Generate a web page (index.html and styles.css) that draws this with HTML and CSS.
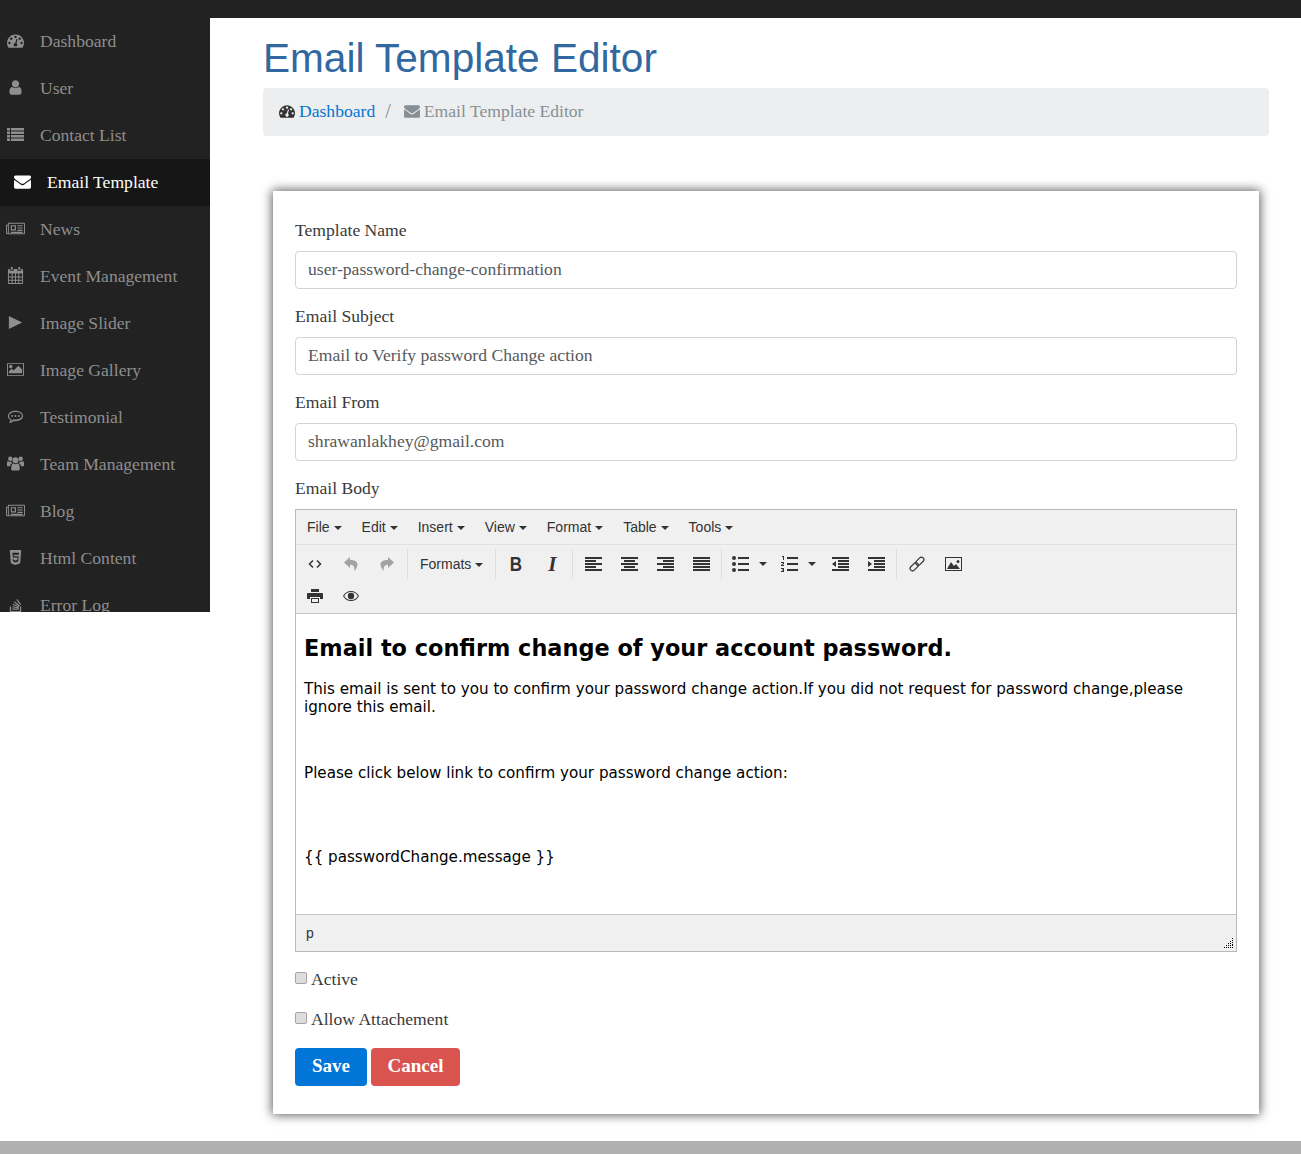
FILE: index.html
```html
<!DOCTYPE html>
<html lang="en">
<head>
  <meta charset="UTF-8">
  <meta name="viewport" content="width=device-width, initial-scale=1">
  <title>Email Template Editor</title>
  <link rel="stylesheet" href="styles.css">
</head>
<body>
  <svg class="defs" xmlns="http://www.w3.org/2000/svg">
    <symbol id="i-gauge" viewBox="0 0 1792 1792"><path d="M384 1152q0-53-37.500-90.500t-90.500-37.500-90.500 37.500-37.500 90.500 37.500 90.500 90.500 37.500 90.500-37.500 37.500-90.500zm192-448q0-53-37.500-90.500t-90.500-37.500-90.500 37.500-37.500 90.500 37.500 90.500 90.500 37.500 90.500-37.500 37.500-90.500zm428 481l101-382q6-26-7.500-48.500t-38.500-29.500-48 6.500-30 39.500l-101 382q-60 5-107 43.500t-63 98.500q-20 77 20 146t117 89 146-20 89-117q16-60-6-117t-72-91zm660-33q0-53-37.500-90.500t-90.500-37.500-90.500 37.500-37.500 90.500 37.500 90.500 90.500 37.500 90.500-37.500 37.500-90.500zm-640-640q0-53-37.500-90.500t-90.500-37.500-90.500 37.500-37.500 90.500 37.500 90.500 90.500 37.500 90.500-37.500 37.500-90.500zm448 192q0-53-37.500-90.500t-90.500-37.500-90.500 37.500-37.500 90.500 37.500 90.500 90.500 37.500 90.500-37.500 37.500-90.500zm320 448q0 261-141 483-19 29-54 29h-1402q-35 0-54-29-141-221-141-483 0-182 71-348t191-286 286-191 348-71 348 71 286 191 191 286 71 348z"/></symbol>
    <symbol id="i-user" viewBox="0 0 1792 1792"><path d="M1536 1399q0 109-62.500 187t-150.500 78h-854q-88 0-150.500-78t-62.500-187q0-85 8.500-160.500t31.500-152 58.500-131 94-89 134.500-34.500q131 128 313 128t313-128q76 0 134.500 34.500t94 89 58.500 131 31.500 152 8.500 160.500zm-256-887q0 159-112.500 271.500t-271.500 112.500-271.500-112.500-112.500-271.500 112.500-271.500 271.500-112.500 271.500 112.500 112.500 271.500z"/></symbol>
    <symbol id="i-list" viewBox="0 0 17 17"><path d="M0 2h3v2.500H0zM4 2h13v2.500H4zM0 5.500h3V8H0zM4 5.500h13V8H4zM0 9h3v2.500H0zM4 9h13v2.500H4zM0 12.500h3V15H0zM4 12.500h13V15H4z"/></symbol>
    <symbol id="i-env" viewBox="0 0 1792 1792"><path d="M1792 710v794q0 66-47 113t-113 47h-1472q-66 0-113-47t-47-113v-794q44 49 101 87 362 246 497 345 57 42 92.500 65.500t94.500 48 110 24.500h2q51 0 110-24.500t94.500-48 92.500-65.500q170-123 498-345 57-39 100-87zm0-294q0 79-49 151t-122 123q-376 261-468 325-10 7-42.500 30.500t-54 38-52 32.500-57.500 27-50 9h-2q-23 0-50-9t-57.500-27-52-32.500-54-38-42.500-30.500q-91-64-262-182.500t-205-142.500q-62-42-117-115.500t-55-136.500q0-78 41.500-130t118.500-52h1472q65 0 112.500 47t47.500 113z"/></symbol>
    <symbol id="i-news" viewBox="0 0 20 18"><path fill-rule="evenodd" d="M2 3h17a1 1 0 0 1 1 1v10a1 1 0 0 1-1 1H1.500A1.500 1.500 0 0 1 0 13.500V5h2zm1 1v9.500a1 1 0 0 1-.3.5H19V4zM1 6v7.500a.5.500 0 0 0 1 0V6zM5 5.500h5.500V11H5zm1.200 1.200v3h3v-3zM12 5.500h5.500v1.200H12zm0 2.400h5.500v1.200H12zm0 2.400h5.500v1.200H12zM5 12.500h12.500v1.200H5z"/></symbol>
    <symbol id="i-cal" viewBox="0 0 18 18"><path fill-rule="evenodd" d="M4 0h2v3H4zM12 0h2v3h-2zM2 2h1v2h4V2h4v2h4V2h1a1 1 0 0 1 1 1v14a1 1 0 0 1-1 1H2a1 1 0 0 1-1-1V3a1 1 0 0 1 1-1zm0 5v3h3V7zm4 0v3h2.500V7zm3.500 0v3H12V7zm3.500 0v3h3V7zM2 11v2.500h3V11zm4 0v2.500h2.500V11zm3.500 0v2.500H12V11zm3.500 0v2.500h3V11zM2 14.500V17h3v-2.500zm4 0V17h2.500v-2.500zm3.500 0V17H12v-2.500zm3.500 0V17h3v-2.500z"/></symbol>
    <symbol id="i-play" viewBox="0 0 18 18"><path d="M2 2l14 7-14 7z"/></symbol>
    <symbol id="i-pic" viewBox="0 0 18 18"><path fill-rule="evenodd" d="M1 2h16a1 1 0 0 1 1 1v12a1 1 0 0 1-1 1H1a1 1 0 0 1-1-1V3a1 1 0 0 1 1-1zm0 1v12h16V3zM2 13v-2l3-3 2 2 5-5 4 4v4zM4 4a1.800 1.800 0 1 1 0 3.600A1.800 1.800 0 0 1 4 4z"/></symbol>
    <symbol id="i-chat" viewBox="0 0 18 18"><path fill-rule="evenodd" d="M9 3c4.400 0 8 2.400 8 5.500S13.400 14 9 14c-.7 0-1.300 0-1.900-.2C5.900 15 4.200 15.900 2 16c.8-.9 1.500-2 1.600-3.200C2 11.800 1 10.200 1 8.500 1 5.400 4.600 3 9 3zm0 1.200c-3.700 0-6.800 1.900-6.800 4.300 0 1.500 1 2.700 2.700 3.600 0 .6-.2 1.100-.4 1.600.9-.4 1.700-1 2.300-1.700.7.100 1.400.2 2.200.2 3.700 0 6.800-1.900 6.800-4 0-2.300-3.100-4-6.800-4zM5.500 7.500a1 1 0 1 1 0 2 1 1 0 0 1 0-2zm3.500 0a1 1 0 1 1 0 2 1 1 0 0 1 0-2zm3.500 0a1 1 0 1 1 0 2 1 1 0 0 1 0-2z"/></symbol>
    <symbol id="i-team" viewBox="0 0 18 18"><circle cx="9" cy="5.500" r="3.200"/><circle cx="3.500" cy="4" r="2.300"/><circle cx="14.500" cy="4" r="2.300"/><path d="M5 10.500C5.500 9.500 6.500 9 7 9c.6.500 1.200.8 2 .8s1.400-.3 2-.8c.5 0 1.500.5 2 1.500.4.900.5 3.500.5 4.500 0 1-.7 1.500-1.500 1.500H6c-.8 0-1.500-.5-1.500-1.500 0-1 .1-3.600.5-4.500zM0 8c0-1 .7-1.500 1.300-1.500.6.400 1.300.6 2.200.6.400 0 .6 0 1-.2.100.8.400 1.400.9 1.900-1 .5-2 1.500-2.200 3.200H1C.3 12 0 11.500 0 11zm18 0c0-1-.7-1.500-1.300-1.500-.6.400-1.300.6-2.200.6-.4 0-.6 0-1-.2-.1.800-.4 1.400-.9 1.900 1 .5 2 1.500 2.200 3.200H17c.7 0 1-.5 1-1z"/></symbol>
    <symbol id="i-html" viewBox="0 0 18 18"><path fill-rule="evenodd" d="M3 1h12l-1 14-5 2-5-2zm2.800 3l.4 5h5l-.2 2.600-2 .6-2-.6-.1-1.300H6l.2 2.600L9 14.200l2.900-.9.5-5.500H7.300L7.200 6h5.400l.1-2z"/></symbol>
    <symbol id="i-stack" viewBox="0 0 18 18"><path d="M3 11h1.300v5h9.400v-5H15v6.300H3z"/><path d="M5.500 13.200h7v1.300h-7zM5.700 10.800l6.900 1.300-.2 1.200-6.900-1.300zM6.500 8.200l6.400 3-.5 1.100-6.400-3zM8.200 5.500l5.400 4.500-.8 1-5.400-4.500zM10.800 3.200l4.100 5.600-1 .8-4.100-5.600z"/></symbol>

    <symbol id="m-code" viewBox="0 0 16 16"><path fill="none" stroke="currentColor" stroke-width="1.500" d="M6 4.500L2.500 8 6 11.500M10 4.500L13.500 8 10 11.500"/></symbol>
    <symbol id="m-undo" viewBox="0 0 16 16"><path d="M7 1L1 6.500 7 12V8.800c3 0 4.500 1.200 4.500 6.200 2-2.500 3-5 3-6.500C14.500 5 11 4 7 4z"/></symbol>
    <symbol id="m-redo" viewBox="0 0 16 16"><path d="M9 1l6 5.500L9 12V8.800c-3 0-4.500 1.200-4.500 6.200-2-2.500-3-5-3-6.500C1.500 5 5 4 9 4z"/></symbol>
    <symbol id="m-left" viewBox="0 0 17 14"><path d="M0 0h17v2H0zM0 3h11v2H0zM0 6h17v2H0zM0 9h11v2H0zM0 12h17v2H0z"/></symbol>
    <symbol id="m-center" viewBox="0 0 17 14"><path d="M0 0h17v2H0zM3 3h11v2H3zM0 6h17v2H0zM3 9h11v2H3zM0 12h17v2H0z"/></symbol>
    <symbol id="m-right" viewBox="0 0 17 14"><path d="M0 0h17v2H0zM6 3h11v2H6zM0 6h17v2H0zM6 9h11v2H6zM0 12h17v2H0z"/></symbol>
    <symbol id="m-just" viewBox="0 0 17 14"><path d="M0 0h17v2H0zM0 3h17v2H0zM0 6h17v2H0zM0 9h17v2H0zM0 12h17v2H0z"/></symbol>
    <symbol id="m-bull" viewBox="0 0 17 16"><circle cx="2" cy="2" r="2"/><circle cx="2" cy="8" r="2"/><circle cx="2" cy="14" r="2"/><path d="M6 1h11v2H6zM6 7h11v2H6zM6 13h11v2H6z"/></symbol>
    <symbol id="m-num" viewBox="0 0 17 16"><path d="M1 0h2v4H2V1H1zM0 6h3v2L1 9h2v1H0V9l2-1.500V7H0zM0 12h3v4H0v-1h2v-.5H1v-1h1V13H0z"/><path d="M6 1h11v2H6zM6 7h11v2H6zM6 13h11v2H6z"/></symbol>
    <symbol id="m-out" viewBox="0 0 17 14"><path d="M0 0h17v2H0zM6 3h11v2H6zM6 6h11v2H6zM6 9h11v2H6zM0 12h17v2H0zM4 4v6L0 7z"/></symbol>
    <symbol id="m-in" viewBox="0 0 17 14"><path d="M0 0h17v2H0zM6 3h11v2H6zM6 6h11v2H6zM6 9h11v2H6zM0 12h17v2H0zM0 4v6l4-3z"/></symbol>
    <symbol id="m-link" viewBox="0 0 16 16"><g fill="none" stroke="currentColor" stroke-width="1.200"><rect x="8.400" y=".45" width="4.800" height="9.500" rx="2.400" transform="rotate(45 10.800 5.200)"/><rect x="2.800" y="6.050" width="4.800" height="9.500" rx="2.400" transform="rotate(45 5.200 10.800)"/></g></symbol>
    <symbol id="m-image" viewBox="0 0 17 14"><path fill-rule="evenodd" d="M0 0h17v14H0zm1 1v12h15V1zM2 12l4-7 3 4 2-2 4 5zM13 3a1.500 1.500 0 1 1 0 3 1.500 1.500 0 0 1 0-3z"/></symbol>
    <symbol id="m-print" viewBox="0 0 16 16"><path fill-rule="evenodd" d="M4 1h8v3H4zM1 5h14a1 1 0 0 1 1 1v5h-3V9H3v2H0V6a1 1 0 0 1 1-1zM4 10h8v5H4zm1 1v3h6v-3z"/></symbol>
    <symbol id="m-eye" viewBox="0 0 16 12"><path fill-rule="evenodd" d="M8 1c3.500 0 6.500 2 8 5-1.500 3-4.500 5-8 5S1.500 9 0 6c1.500-3 4.500-5 8-5zm0 1C5 2 2.600 3.600 1.200 6 2.600 8.400 5 10 8 10s5.400-1.600 6.800-4C13.400 3.600 11 2 8 2zm0 .8a3.200 3.200 0 1 1 0 6.400 3.200 3.200 0 0 1 0-6.400z"/></symbol>
  </svg>

  <div class="topbar"></div>

  <div class="layout">
    <nav class="sidebar">
      <a class="nav-item" href="#"><svg class="nav-icon"><use href="#i-gauge"/></svg>Dashboard</a>
      <a class="nav-item" href="#"><svg class="nav-icon"><use href="#i-user"/></svg>User</a>
      <a class="nav-item" href="#"><svg class="nav-icon"><use href="#i-list"/></svg>Contact List</a>
      <a class="nav-item active" href="#"><svg class="nav-icon"><use href="#i-env"/></svg>Email Template</a>
      <a class="nav-item" href="#"><svg class="nav-icon wide"><use href="#i-news"/></svg>News</a>
      <a class="nav-item" href="#"><svg class="nav-icon"><use href="#i-cal"/></svg>Event Management</a>
      <a class="nav-item" href="#"><svg class="nav-icon"><use href="#i-play"/></svg>Image Slider</a>
      <a class="nav-item" href="#"><svg class="nav-icon"><use href="#i-pic"/></svg>Image Gallery</a>
      <a class="nav-item" href="#"><svg class="nav-icon"><use href="#i-chat"/></svg>Testimonial</a>
      <a class="nav-item" href="#"><svg class="nav-icon"><use href="#i-team"/></svg>Team Management</a>
      <a class="nav-item" href="#"><svg class="nav-icon wide"><use href="#i-news"/></svg>Blog</a>
      <a class="nav-item" href="#"><svg class="nav-icon"><use href="#i-html"/></svg>Html Content</a>
      <a class="nav-item" href="#"><svg class="nav-icon"><use href="#i-stack"/></svg>Error Log</a>
    </nav>

    <main class="content">
      <h1 class="page-title">Email Template Editor</h1>
      <div class="breadcrumb">
        <svg class="crumb-icon dark"><use href="#i-gauge"/></svg>
        <a href="#">Dashboard</a>
        <span class="crumb-sep">/</span>
        <svg class="crumb-icon"><use href="#i-env"/></svg>
        <span>Email Template Editor</span>
      </div>

      <form class="card">
        <div class="field">
          <label>Template Name</label>
          <input type="text" value="user-password-change-confirmation">
        </div>
        <div class="field">
          <label>Email Subject</label>
          <input type="text" value="Email to Verify password Change action">
        </div>
        <div class="field">
          <label>Email From</label>
          <input type="text" value="shrawanlakhey@gmail.com">
        </div>
        <div class="field">
          <label>Email Body</label>
          <div class="editor">
            <div class="menubar">
              <span class="menu-btn">File<i class="caret"></i></span>
              <span class="menu-btn">Edit<i class="caret"></i></span>
              <span class="menu-btn">Insert<i class="caret"></i></span>
              <span class="menu-btn">View<i class="caret"></i></span>
              <span class="menu-btn">Format<i class="caret"></i></span>
              <span class="menu-btn">Table<i class="caret"></i></span>
              <span class="menu-btn">Tools<i class="caret"></i></span>
            </div>
            <div class="toolbar">
              <div class="tool-row">
                <div class="tool-group">
                  <span class="tool"><svg class="i16"><use href="#m-code"/></svg></span>
                  <span class="tool faded"><svg class="i16"><use href="#m-undo"/></svg></span>
                  <span class="tool faded"><svg class="i16"><use href="#m-redo"/></svg></span>
                </div>
                <div class="tool-group flush">
                  <span class="tool-select">Formats<i class="caret"></i></span>
                </div>
                <div class="tool-group">
                  <span class="tool glyph-b">B</span>
                  <span class="tool glyph-i">I</span>
                </div>
                <div class="tool-group">
                  <span class="tool"><svg class="i17"><use href="#m-left"/></svg></span>
                  <span class="tool"><svg class="i17"><use href="#m-center"/></svg></span>
                  <span class="tool"><svg class="i17"><use href="#m-right"/></svg></span>
                  <span class="tool"><svg class="i17"><use href="#m-just"/></svg></span>
                </div>
                <div class="tool-group">
                  <span class="tool split"><svg class="i17t"><use href="#m-bull"/></svg><i class="caret"></i></span>
                  <span class="tool split"><svg class="i17t"><use href="#m-num"/></svg><i class="caret"></i></span>
                  <span class="tool"><svg class="i17"><use href="#m-out"/></svg></span>
                  <span class="tool"><svg class="i17"><use href="#m-in"/></svg></span>
                </div>
                <div class="tool-group last">
                  <span class="tool"><svg class="i16"><use href="#m-link"/></svg></span>
                  <span class="tool"><svg class="i17"><use href="#m-image"/></svg></span>
                </div>
              </div>
              <div class="tool-row">
                <div class="tool-group last">
                  <span class="tool"><svg class="i16"><use href="#m-print"/></svg></span>
                  <span class="tool"><svg class="i16"><use href="#m-eye"/></svg></span>
                </div>
              </div>
            </div>
            <div class="editor-body">
              <h1>Email to confirm change of your account password.</h1>
              <p>This email is sent to you to confirm your password change action.If you did not request for password change,please ignore this email.</p>
              <p>&nbsp;</p>
              <p>Please click below link to confirm your password change action:</p>
              <p>&nbsp;<br>&nbsp;</p>
              <p>{{ passwordChange.message }}</p>
            </div>
            <div class="statusbar">
              <span>p</span>
              <svg class="resize" width="10" height="10" viewBox="0 0 10 10"><path d="M9 0h1v1H9zM9 2h1v1H9zM7 3h1v1H7zM9 4h1v1H9zM5 5h1v1H5zM7 5h1v1H7zM9 6h1v1H9zM3 7h1v1H3zM5 7h1v1H5zM7 7h1v1H7zM9 7h1v1H9zM1 9h1v1H1zM3 9h1v1H3zM5 9h1v1H5zM7 9h1v1H7zM9 9h1v1H9z"/></svg>
            </div>
          </div>
        </div>
        <label class="check"><input type="checkbox"> Active</label>
        <label class="check"><input type="checkbox"> Allow Attachement</label>
        <div class="actions">
          <button type="button" class="btn save">Save</button>
          <button type="button" class="btn cancel">Cancel</button>
        </div>
      </form>
    </main>
  </div>

  <div class="footer"></div>
</body>
</html>
```

FILE: styles.css
```css
* { box-sizing: border-box; }
html, body { margin: 0; padding: 0; }
body {
  background: #fff;
  color: #373a3c;
  font-family: "Liberation Serif", serif;
  font-size: 17.6px;
  line-height: 24px;
}
.defs { display: none; }

.topbar { height: 18px; background: #222; }
.layout { display: flex; align-items: flex-start; }

/* sidebar */
.sidebar {
  flex: 0 0 210px;
  height: 594px;
  overflow: hidden;
  background: #222;
}
.nav-item {
  display: flex;
  align-items: center;
  height: 47px;
  padding: 0 0 2px 7px;
  color: #8e8e8e;
  text-decoration: none;
}
.nav-item.active {
  padding-left: 14px;
  background: #161616;
  color: #fff;
}
.nav-icon {
  flex: none;
  width: 17px;
  height: 17px;
  margin-right: 16px;
  fill: currentColor;
}
.nav-icon.wide {
  width: 19px;
  height: 19px;
  margin: 0 15px 0 -1px;
}

/* main column */
.content {
  flex: 1;
  min-width: 0;
  padding: 16px 32px 0 53px;
}
.page-title {
  margin: 0 0 6px;
  color: #31689f;
  font-family: "Liberation Sans", sans-serif;
  font-size: 40.6px;
  font-weight: 400;
  line-height: 48px;
}
.breadcrumb {
  display: flex;
  align-items: center;
  height: 48px;
  padding: 0 16px 2px;
  border-radius: 4px;
  background: #eceeef;
  color: #868e96;
}
.breadcrumb a { color: #0275d8; text-decoration: none; }
.crumb-icon {
  width: 16px;
  height: 16px;
  margin-right: 4px;
  fill: #868e96;
}
.crumb-icon.dark { fill: #333; }
.crumb-sep { margin: 0 13px 0 10px; font-size: 20px; }

/* form card */
.card {
  margin: 55px 10px 0;
  padding: 28px 22px;
  background: #fff;
  box-shadow: 0 0 10px 1px rgba(0, 0, 0, 0.65);
}
.field { margin-bottom: 16px; }
.field label { display: block; margin-bottom: 10px; line-height: 22px; }
.field input {
  display: block;
  width: 100%;
  height: 38px;
  padding: 0 12px 2px;
  border: 1px solid #ced4da;
  border-radius: 4px;
  color: #55595c;
  font: inherit;
}
.check {
  display: flex;
  align-items: center;
  gap: 4px;
  height: 24px;
  margin-bottom: 16px;
  padding-bottom: 2px;
}
.check input {
  appearance: none;
  width: 12px;
  height: 12px;
  margin: -2px 0 0;
  border: 1px solid #a5a5a5;
  border-radius: 2px;
  background: #ddd;
}
.actions { display: flex; gap: 4px; }
.btn {
  height: 38px;
  padding: 0 0 3px;
  border: 0;
  border-radius: 4px;
  color: #fff;
  font: inherit;
  font-size: 19px;
  font-weight: 700;
}
.btn.save { width: 72px; background: #0275d8; }
.btn.cancel { width: 89px; background: #d9534f; }

/* editor */
.editor {
  border: 1px solid #b9b9b9;
  color: #333;
  font-family: "Liberation Sans", sans-serif;
  font-size: 14px;
  line-height: 20px;
}
.menubar {
  display: flex;
  height: 35px;
  padding: 7px 0 0 1px;
  border-bottom: 1px solid #e2e2e2;
  background: #f0f0f0;
}
.menu-btn { padding: 0 10px; white-space: nowrap; }
.caret {
  display: inline-block;
  margin-left: 4px;
  vertical-align: 2px;
  border-top: 4px solid #333;
  border-left: 4px solid transparent;
  border-right: 4px solid transparent;
}
.toolbar {
  padding: 3px 0 1px 1px;
  border-bottom: 1px solid #c5c5c5;
  background: #f0f0f0;
}
.tool-row { display: flex; height: 32px; align-items: center; }
.tool-group {
  display: flex;
  align-items: center;
  height: 30px;
  padding-right: 2px;
  border-right: 1px solid #dcdcdc;
}
.tool-group + .tool-group { padding-left: 2px; }
.tool-group.flush { padding: 0; }
.tool-group.last { border-right: 0; }
.tool {
  display: flex;
  align-items: center;
  justify-content: center;
  width: 36px;
  height: 30px;
  color: #333;
}
.tool svg { fill: currentColor; }
.tool.faded { color: #a3a3a3; }
.tool.split { justify-content: flex-start; width: 48px; padding-left: 8px; }
.tool.split .caret { margin-left: 10px; vertical-align: 0; }
.tool.split + .tool.split { width: 50px; padding-left: 9px; }
.i16 { width: 16px; height: 16px; }
.i17 { width: 17px; height: 14px; }
.i17t { width: 17px; height: 16px; flex: none; }
.tool-select { padding: 0 12px; white-space: nowrap; }
.glyph-b { font-size: 20px; font-weight: 700; transform: scaleX(0.85); }
.glyph-i { font-family: "Liberation Serif", serif; font-size: 21px; font-style: italic; font-weight: 700; }

.editor-body {
  height: 300px;
  padding: 8px;
  background: #fff;
  color: #000;
  font-family: "DejaVu Sans", sans-serif;
  font-size: 15.15px;
  line-height: 18px;
}
.editor-body h1 {
  margin: 12px 0 18px;
  font-size: 22.4px;
  line-height: 28px;
}
.editor-body p { margin: 0 0 15px; }

.statusbar {
  display: flex;
  justify-content: space-between;
  height: 37px;
  padding: 8px 3px 3px 10px;
  border-top: 1px solid #c5c5c5;
  background: #f0f0f0;
}
.resize { align-self: flex-end; }

.footer { height: 13px; margin-top: 27px; background: #b0b0b0; }
```
